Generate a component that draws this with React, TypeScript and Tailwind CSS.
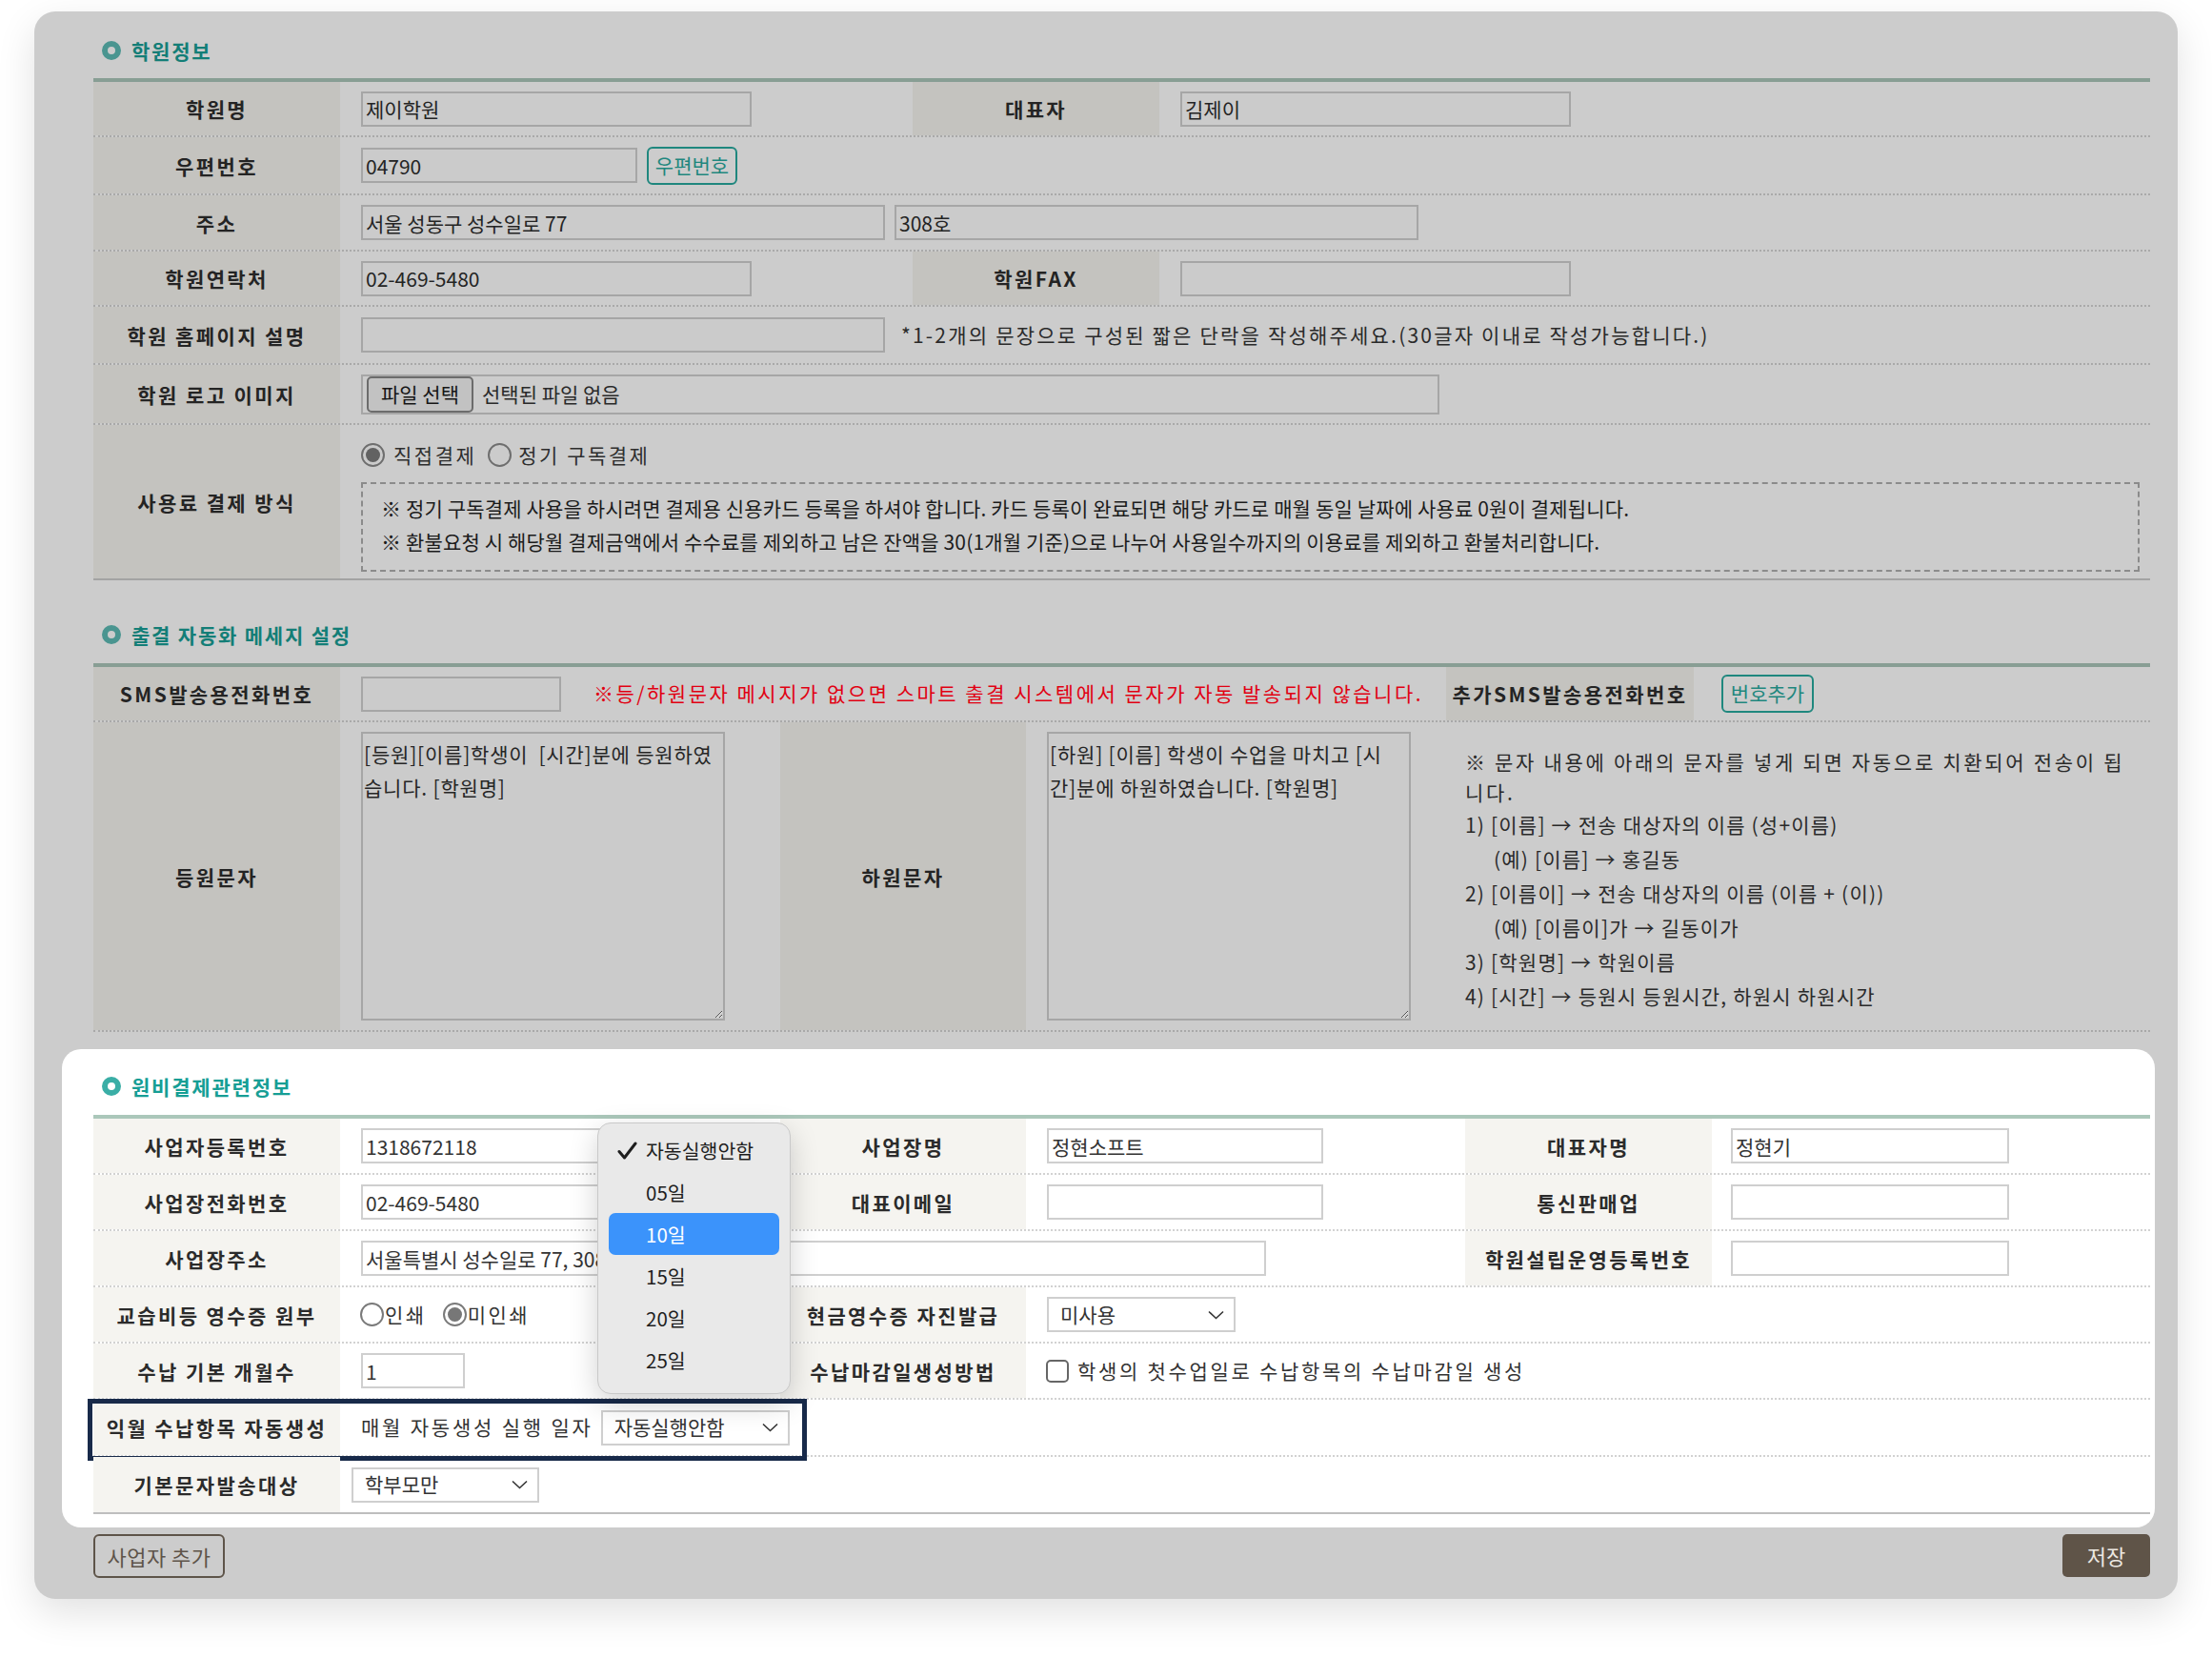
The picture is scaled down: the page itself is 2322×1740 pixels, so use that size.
import React from "react";

type Kids = { children?: React.ReactNode };

const SectionTitle = ({ children, dim }: Kids & { dim?: boolean }) => (
  <div className="flex items-center gap-[11px] pl-[9px]">
    <span
      className={
        dim
          ? "w-[20px] h-[20px] rounded-full border-[6px] border-[#4a9590] blur-[0.5px]"
          : "w-[20px] h-[20px] rounded-full border-[6px] border-[#3aaea6] blur-[0.5px]"
      }
    />
    <span
      className={`text-[21px] font-bold tracking-[1.8px] leading-[24px] ${
        dim ? "text-[#137e77]" : "text-[#169e95]"
      }`}
    >
      {children}
    </span>
  </div>
);

const Label = ({ children, dim, w = "w-[259px]" }: Kids & { dim?: boolean; w?: string }) => (
  <div
    className={`${w} shrink-0 flex items-center justify-center pt-[2px] text-[21px] font-bold tracking-[2.4px] ${
      dim ? "bg-[#c4c3bf] text-[#242424]" : "bg-[#f5f4f0] text-[#2b2b2b]"
    }`}
  >
    {children}
  </div>
);

const Row = ({ children, h, dim, last }: Kids & { h: string; dim?: boolean; last?: boolean }) => {
  let border = dim ? "border-b-2 border-dotted border-[#a9a9a9]" : "border-b-2 border-dotted border-[#d2d2d2]";
  if (last) border = dim ? "border-b-2 border-solid border-[#a3a3a3]" : "border-b-2 border-solid border-[#bebebe]";
  return <div className={`relative flex ${h} ${border}`}>{children}</div>;
};

const Field = ({ w, value = "", dim, h = "h-[37px]" }: { w: string; value?: string; dim?: boolean; h?: string }) => (
  <input
    readOnly
    defaultValue={value}
    className={`${w} ${h} border-2 px-[3px] text-[21px] outline-none ${
      dim ? "border-[#a6a6a6] bg-[#cbcbcb] text-[#242424]" : "border-[#cfcfcf] bg-white text-[#333333]"
    }`}
  />
);

const Chevron = () => (
  <svg width="17" height="10" viewBox="0 0 17 10" fill="none">
    <path d="M1 1.5l7.5 7 7.5-7" stroke="#333" strokeWidth="1.6" />
  </svg>
);

const Select = ({ w, value }: { w: string; value: string }) => (
  <div className={`${w} h-[37px] border-2 border-[#cfcfcf] bg-white flex items-center justify-between pl-[12px] pr-[10px] text-[21px] tracking-normal text-[#333333]`}>
    <span>{value}</span>
    <Chevron />
  </div>
);

const Radio = ({ checked, dim }: { checked?: boolean; dim?: boolean }) => (
  <span
    className={`w-[25px] h-[25px] rounded-full border-2 flex items-center justify-center ${
      dim ? "border-[#6e6e6e] bg-[#cbcbcb]" : "border-[#7a7a7a] bg-white"
    }`}
  >
    {checked && <span className={dim ? "w-[15px] h-[15px] rounded-full bg-[#626262]" : "w-[15px] h-[15px] rounded-full bg-[#777777]"} />}
  </span>
);

const TealButton = ({ children, w }: Kids & { w: string }) => (
  <button className={`${w} h-[40px] rounded-[6px] border-2 border-[#1f877e] text-[#1f877e] text-[21px] bg-transparent`}>
    {children}
  </button>
);

const dayOptions = ["자동실행안함", "05일", "10일", "15일", "20일", "25일"];

export default function App() {
  return (
    <div className="w-[2322px] h-[1740px] bg-white overflow-hidden font-['Noto_Sans_CJK_KR','Noto_Sans',sans-serif] text-[#262626]">
      <div className="ml-[36px] mt-[12px] w-[2250px] h-[1666px] rounded-[22px] bg-[#cccccc] shadow-[0_14px_40px_rgba(0,0,0,0.12)] pl-[62px] pr-[29px] flex flex-col">
        {/* 학원정보 */}
        <div className="pt-[29px] pb-[17px]">
          <SectionTitle dim>학원정보</SectionTitle>
        </div>
        <div className="border-t-4 border-[#889e94]">
          <Row h="h-[58px]" dim>
            <Label dim>학원명</Label>
            <div className="w-[601px] pl-[22px] flex items-center">
              <Field dim w="w-[410px]" value="제이학원" />
            </div>
            <Label dim>대표자</Label>
            <div className="flex-1 pl-[22px] flex items-center">
              <Field dim w="w-[410px]" value="김제이" />
            </div>
          </Row>
          <Row h="h-[61px]" dim>
            <Label dim>우편번호</Label>
            <div className="flex-1 pl-[22px] flex items-center gap-[10px]">
              <Field dim w="w-[290px]" value="04790" />
              <TealButton w="w-[95px]">우편번호</TealButton>
            </div>
          </Row>
          <Row h="h-[59px]" dim>
            <Label dim>주소</Label>
            <div className="flex-1 pl-[22px] flex items-center gap-[10px]">
              <Field dim w="w-[550px]" value="서울 성동구 성수일로 77" />
              <Field dim w="w-[550px]" value="308호" />
            </div>
          </Row>
          <Row h="h-[58px]" dim>
            <Label dim>학원연락처</Label>
            <div className="w-[601px] pl-[22px] flex items-center">
              <Field dim w="w-[410px]" value="02-469-5480" />
            </div>
            <Label dim>학원FAX</Label>
            <div className="flex-1 pl-[22px] flex items-center">
              <Field dim w="w-[410px]" />
            </div>
          </Row>
          <Row h="h-[61px]" dim>
            <Label dim>학원 홈페이지 설명</Label>
            <div className="flex-1 pl-[22px] flex items-center">
              <Field dim w="w-[550px]" />
              <span className="ml-[17px] text-[21px] tracking-[2.2px] text-[#2a2a2a]">
                *1-2개의 문장으로 구성된 짧은 단락을 작성해주세요.(30글자 이내로 작성가능합니다.)
              </span>
            </div>
          </Row>
          <Row h="h-[63px]" dim>
            <Label dim>학원 로고 이미지</Label>
            <div className="flex-1 pl-[22px] flex items-center">
              <div className="w-[1132px] h-[42px] border-2 border-[#a6a6a6] flex items-center pl-[4px]">
                <button className="w-[112px] h-[38px] rounded-[5px] border-2 border-[#6c6c6c] bg-[#c2c2c2] text-[21px] text-[#161616]">
                  파일 선택
                </button>
                <span className="ml-[9px] text-[21px] text-[#2a2a2a]">선택된 파일 없음</span>
              </div>
            </div>
          </Row>
          <Row h="h-[163px]" dim last>
            <Label dim>사용료 결제 방식</Label>
            <div className="flex-1 pl-[22px] pr-[11px] pt-[19px] flex flex-col">
              <div className="flex items-center h-[25px] text-[21px] tracking-[2.5px] text-[#2e2e2e]">
                <Radio dim checked />
                <span className="ml-[9px]">직접결제</span>
                <span className="ml-[12px]">
                  <Radio dim />
                </span>
                <span className="ml-[7px]">정기 구독결제</span>
              </div>
              <div className="mt-[16px] h-[94px] border-2 border-dashed border-[#8b8b8b] pl-[19px] pt-[8px] text-[21px] leading-[35px] tracking-[0.15px] text-[#1c1c1c]">
                <div>※ 정기 구독결제 사용을 하시려면 결제용 신용카드 등록을 하셔야 합니다. 카드 등록이 완료되면 해당 카드로 매월 동일 날짜에 사용료 0원이 결제됩니다.</div>
                <div>※ 환불요청 시 해당월 결제금액에서 수수료를 제외하고 남은 잔액을 30(1개월 기준)으로 나누어 사용일수까지의 이용료를 제외하고 환불처리합니다.</div>
              </div>
            </div>
          </Row>
        </div>

        {/* 출결 자동화 메세지 설정 */}
        <div className="pt-[45px] pb-[18px]">
          <SectionTitle dim>출결 자동화 메세지 설정</SectionTitle>
        </div>
        <div className="border-t-4 border-[#889e94]">
          <Row h="h-[58px]" dim>
            <Label dim>SMS발송용전화번호</Label>
            <div className="w-[1161px] pl-[22px] flex items-center">
              <Field dim w="w-[210px]" />
              <span className="ml-[34px] text-[21px] tracking-[2.5px] text-[#e10012]">
                ※등/하원문자 메시지가 없으면 스마트 출결 시스템에서 문자가 자동 발송되지 않습니다.
              </span>
            </div>
            <Label dim w="w-[260px]">추가SMS발송용전화번호</Label>
            <div className="flex-1 pl-[29px] flex items-center">
              <TealButton w="w-[97px]">번호추가</TealButton>
            </div>
          </Row>
          <Row h="h-[325px]" dim>
            <Label dim>등원문자</Label>
            <div className="w-[462px] pl-[22px] flex items-center">
              <textarea
                readOnly
                defaultValue={"[등원][이름]학생이  [시간]분에 등원하였\n습니다. [학원명]"}
                className="w-[382px] h-[303px] border-2 border-[#a6a6a6] bg-[#cbcbcb] px-[1px] pt-[4px] text-[21px] leading-[35px] tracking-[0.8px] text-[#262626] outline-none whitespace-pre"
              />
            </div>
            <Label dim w="w-[258px]">하원문자</Label>
            <div className="w-[441px] pl-[22px] flex items-center">
              <textarea
                readOnly
                defaultValue={"[하원] [이름] 학생이 수업을 마치고 [시\n간]분에 하원하였습니다. [학원명]"}
                className="w-[382px] h-[303px] border-2 border-[#a6a6a6] bg-[#cbcbcb] px-[1px] pt-[4px] text-[21px] leading-[35px] tracking-[0.8px] text-[#262626] outline-none whitespace-pre"
              />
            </div>
            <div className="flex-1 pl-[20px] pt-[25px] text-[21px] text-[#2a2a2a]">
              <div className="leading-[32px] tracking-[2.7px]">
                ※ 문자 내용에 아래의 문자를 넣게 되면 자동으로 치환되어 전송이 됩
                <br />
                니다.
              </div>
              <div className="leading-[36px] tracking-[1.2px]">
                <div>1) [이름] → 전송 대상자의 이름 (성+이름)</div>
                <div className="pl-[30px]">(예) [이름] → 홍길동</div>
                <div>2) [이름이] → 전송 대상자의 이름 (이름 + (이))</div>
                <div className="pl-[30px]">(예) [이름이]가 → 길동이가</div>
                <div>3) [학원명] → 학원이름</div>
                <div>4) [시간] → 등원시 등원시간, 하원시 하원시간</div>
              </div>
            </div>
          </Row>
        </div>

        {/* 원비결제관련정보 */}
        <div className="-ml-[33px] -mr-[5px] mt-[18px] pl-[33px] pr-[5px] pb-[14px] bg-white rounded-[20px]">
          <div className="pt-[27px] pb-[18px]">
            <SectionTitle>원비결제관련정보</SectionTitle>
          </div>
          <div className="relative border-t-4 border-[#abc7ba]">
            <Row h="h-[59px]">
              <Label>사업자등록번호</Label>
              <div className="w-[462px] pl-[22px] flex items-center">
                <Field w="w-[290px]" value="1318672118" />
              </div>
              <Label w="w-[258px]">사업장명</Label>
              <div className="w-[461px] pl-[22px] flex items-center">
                <Field w="w-[290px]" value="정현소프트" />
              </div>
              <Label>대표자명</Label>
              <div className="flex-1 pl-[20px] flex items-center">
                <Field w="w-[292px]" value="정현기" />
              </div>
            </Row>
            <Row h="h-[59px]">
              <Label>사업장전화번호</Label>
              <div className="w-[462px] pl-[22px] flex items-center">
                <Field w="w-[290px]" value="02-469-5480" />
              </div>
              <Label w="w-[258px]">대표이메일</Label>
              <div className="w-[461px] pl-[22px] flex items-center">
                <Field w="w-[290px]" />
              </div>
              <Label>통신판매업</Label>
              <div className="flex-1 pl-[20px] flex items-center">
                <Field w="w-[292px]" />
              </div>
            </Row>
            <Row h="h-[59px]">
              <Label>사업장주소</Label>
              <div className="w-[1181px] pl-[22px] flex items-center">
                <Field w="w-[950px]" value="서울특별시 성수일로 77, 308호" />
              </div>
              <Label>학원설립운영등록번호</Label>
              <div className="flex-1 pl-[20px] flex items-center">
                <Field w="w-[292px]" />
              </div>
            </Row>
            <Row h="h-[59px]">
              <Label>교습비등 영수증 원부</Label>
              <div className="w-[462px] pl-[21px] flex items-center text-[21px] tracking-[2.5px] text-[#333333]">
                <Radio />
                <span className="ml-[1px]">인쇄</span>
                <span className="ml-[17px]">
                  <Radio checked />
                </span>
                <span className="ml-[1px]">미인쇄</span>
              </div>
              <Label w="w-[258px]">현금영수증 자진발급</Label>
              <div className="flex-1 pl-[22px] flex items-center">
                <Select w="w-[198px]" value="미사용" />
              </div>
            </Row>
            <Row h="h-[59px]">
              <Label>수납 기본 개월수</Label>
              <div className="w-[462px] pl-[22px] flex items-center">
                <Field w="w-[109px]" value="1" />
              </div>
              <Label w="w-[258px]">수납마감일생성방법</Label>
              <div className="flex-1 pl-[21px] flex items-center text-[21px] tracking-[2.7px] text-[#333333]">
                <span className="w-[24px] h-[24px] rounded-[5px] border-2 border-[#666666] bg-white" />
                <span className="ml-[9px]">학생의 첫수업일로 수납항목의 수납마감일 생성</span>
              </div>
            </Row>
            <Row h="h-[60px]">
              <Label>익월 수납항목 자동생성</Label>
              <div className="flex-1 pl-[22px] flex items-center text-[21px] tracking-[2.8px] text-[#333333]">
                <span>매월 자동생성 실행 일자</span>
                <span className="ml-[8px]">
                  <Select w="w-[198px]" value="자동실행안함" />
                </span>
              </div>
              <div className="absolute -top-[1px] -left-[6px] w-[755px] h-[65px] border-[5px] border-[#182a4a] pointer-events-none" />
            </Row>
            <Row h="h-[60px]" last>
              <Label>기본문자발송대상</Label>
              <div className="flex-1 pl-[12px] flex items-center">
                <Select w="w-[197px]" value="학부모만" />
              </div>
            </Row>

            {/* open native select list */}
            <div className="absolute top-[4px] left-[529px] z-10 w-[203px] h-[285px] rounded-[14px] bg-[#e9e9e9] border border-[#c9c9c9] shadow-[0_10px_30px_rgba(0,0,0,0.18)] pt-[6px] px-[11px]">
              {dayOptions.map((d, i) => (
                <div
                  key={d}
                  className={`h-[44px] flex items-center rounded-[7px] text-[20.5px] ${
                    i === 2 ? "bg-[#3b93fb] text-white" : "text-[#1e1e1e]"
                  }`}
                >
                  <span className="w-[39px] pl-[9px] flex items-center">
                    {i === 0 && (
                      <svg width="21" height="19" viewBox="0 0 21 19" fill="none">
                        <path d="M2 10.5l5.5 6.5L19 2" stroke="#1e1e1e" strokeWidth="3" strokeLinecap="round" strokeLinejoin="round" />
                      </svg>
                    )}
                  </span>
                  <span>{d}</span>
                </div>
              ))}
            </div>
          </div>
        </div>

        <div className="mt-[7px] flex items-start justify-between">
          <button className="w-[138px] h-[46px] rounded-[6px] border-2 border-[#5e5449] text-[22px] text-[#5e5449] tracking-[0.5px]">
            사업자 추가
          </button>
          <button className="w-[92px] h-[45px] rounded-[5px] bg-[#5f5448] text-[22px] text-[#ece8e2]">
            저장
          </button>
        </div>
      </div>
    </div>
  );
}
